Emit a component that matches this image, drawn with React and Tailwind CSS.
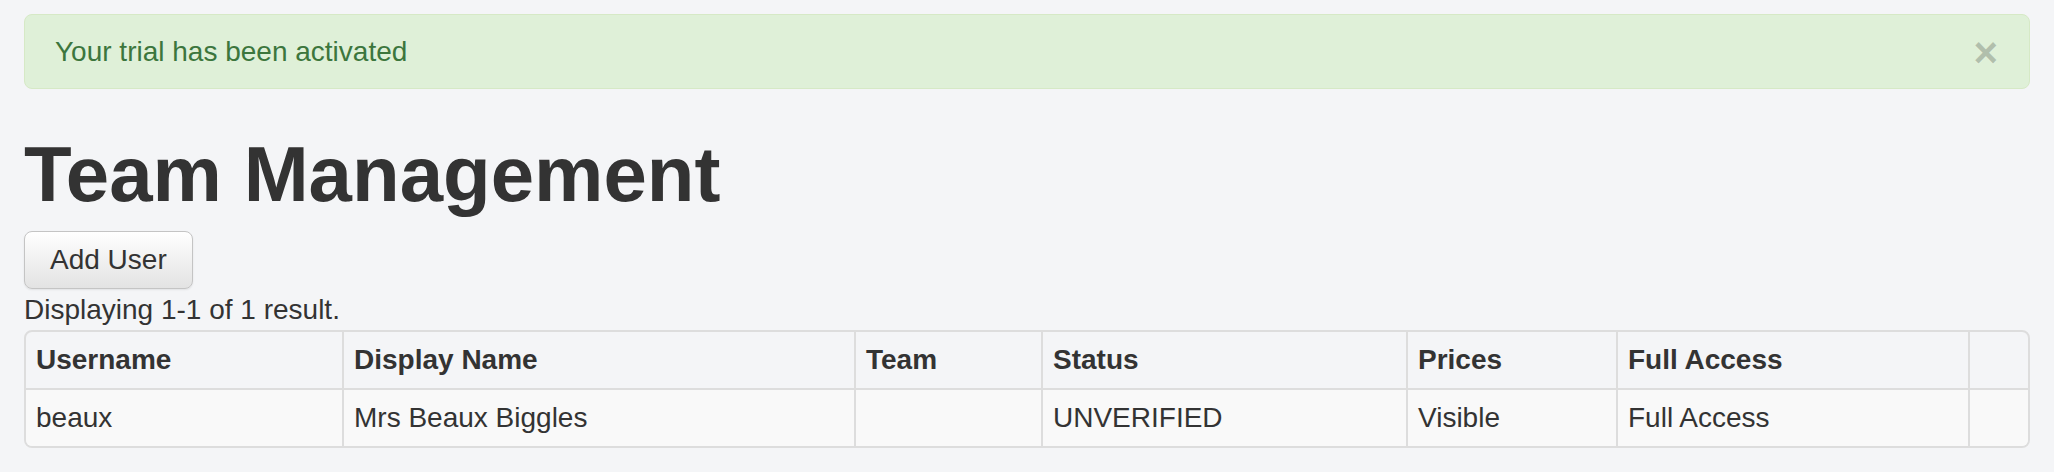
import React from "react";

const cols = [316, 512, 187, 365, 210, 352, 60];
const headers = ["Username", "Display Name", "Team", "Status", "Prices", "Full Access", ""];
const row = ["beaux", "Mrs Beaux Biggles", "", "UNVERIFIED", "Visible", "Full Access", ""];

export default function App() {
  return (
    <div
      className="min-h-[472px] bg-[#f4f5f7] px-[24px] pt-[14px] text-[#333333]"
      style={{ fontFamily: '"Liberation Sans", Arial, Helvetica, sans-serif' }}
    >
      <div className="flex h-[75px] items-center justify-between rounded-[8px] border border-[#d6e9c6] bg-[#dff0d8] pt-[1px] pl-[30px] pr-[31px] text-[28px] leading-[40px] text-[#3c763d]">
        <span>Your trial has been activated</span>
        <span className="mt-[2px] text-[42px] font-bold leading-[40px] text-black opacity-20 [text-shadow:0_1px_0_#fff]">
          ×
        </span>
      </div>

      <h1 className="mt-[42px] mb-[14px] text-[78px] font-bold leading-[86px] text-[#333333]">
        Team Management
      </h1>

      <button className="block rounded-[8px] border border-[#c4c4c4] bg-gradient-to-b from-white to-[#e3e3e3] px-[25px] py-[8px] text-[28px] leading-[40px] text-[#333333] shadow-[0_1px_2px_rgba(0,0,0,0.08)]">
        Add User
      </button>

      <div className="mt-px text-[28px] leading-[40px]">Displaying 1-1 of 1 result.</div>

      <div className="overflow-hidden rounded-[8px] border-2 border-[#dddddd]">
        <table className="w-full table-fixed border-separate border-spacing-0 text-[28px] leading-[40px]">
          <colgroup>
            {cols.map((w, i) => (
              <col key={i} style={{ width: w }} />
            ))}
          </colgroup>
          <thead>
            <tr>
              {headers.map((h, i) => (
                <th
                  key={i}
                  className={
                    "border-b-2 border-[#dddddd] px-[10px] pt-[8px] pb-[8px] text-left font-bold " +
                    (i > 0 ? "border-l-2" : "")
                  }
                >
                  {h}
                </th>
              ))}
            </tr>
          </thead>
          <tbody>
            <tr className="bg-[#f9f9f9]">
              {row.map((c, i) => (
                <td
                  key={i}
                  className={
                    "border-[#dddddd] px-[10px] pt-[8px] pb-[8px] " + (i > 0 ? "border-l-2" : "")
                  }
                >
                  {c}
                </td>
              ))}
            </tr>
          </tbody>
        </table>
      </div>
    </div>
  );
}
